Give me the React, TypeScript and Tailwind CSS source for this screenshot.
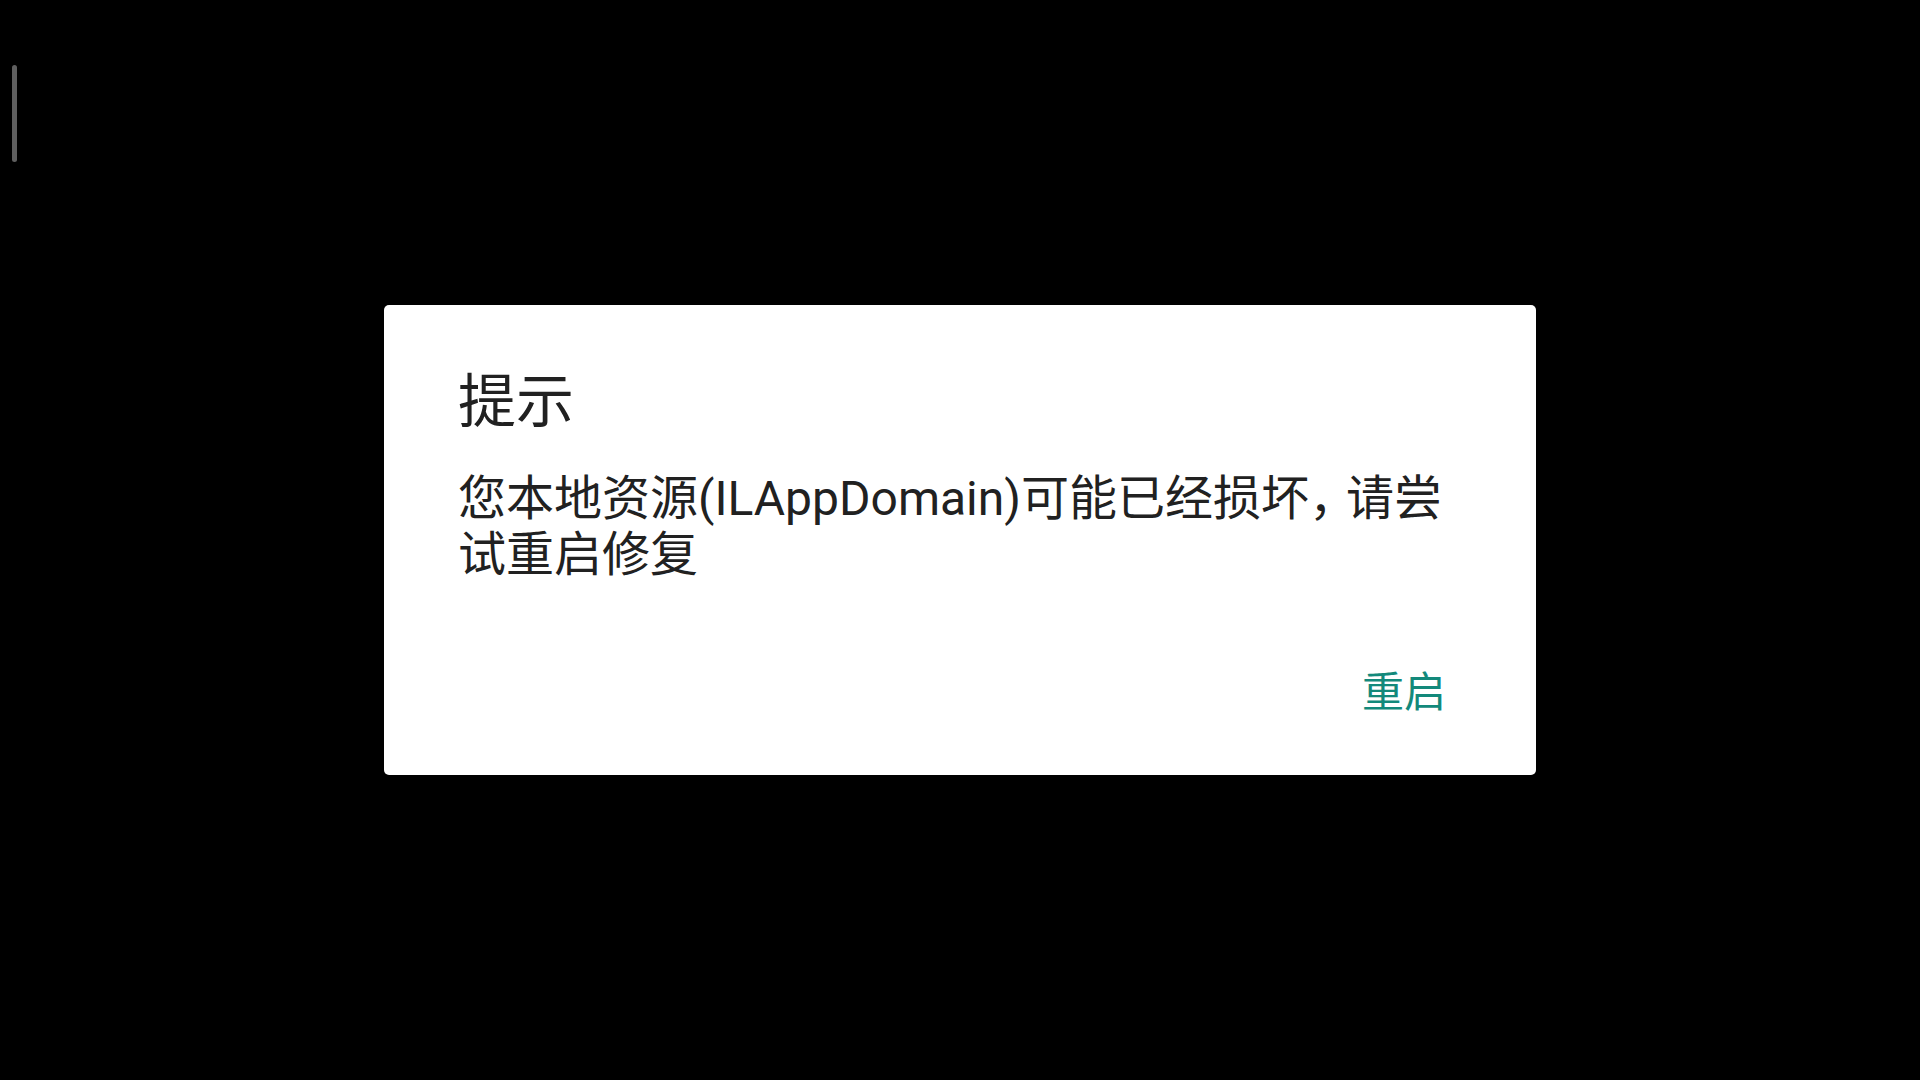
export default function App() {
  return (
    <div className="relative w-[1920px] h-[1080px] bg-black flex items-center justify-center font-['Roboto','Noto_Sans_CJK_SC',sans-serif]">
      {/* scroll indicator */}
      <div className="absolute left-[12px] top-[65px] w-[5px] h-[97px] rounded-full bg-[#5f5f5f]"></div>

      <div className="w-[1152px] h-[470px] bg-white rounded-[5px] flex flex-col pl-[74px] pr-[90px] pt-[62px]">
        <h1 className="text-[58px] leading-[70px] text-[#212121] font-normal">提示</h1>
        <p className="mt-[34px] text-[48px] leading-[56px] text-[#212121]">
          您本地资源(ILAppDomain)可能已经损坏<span className="tracking-[-11px]">，</span>请尝试重启修复
        </p>
        <div className="mt-auto mb-[57px] flex justify-end">
          <button className="text-[42px] leading-[50px] text-[#13897b]">重启</button>
        </div>
      </div>
    </div>
  )
}
